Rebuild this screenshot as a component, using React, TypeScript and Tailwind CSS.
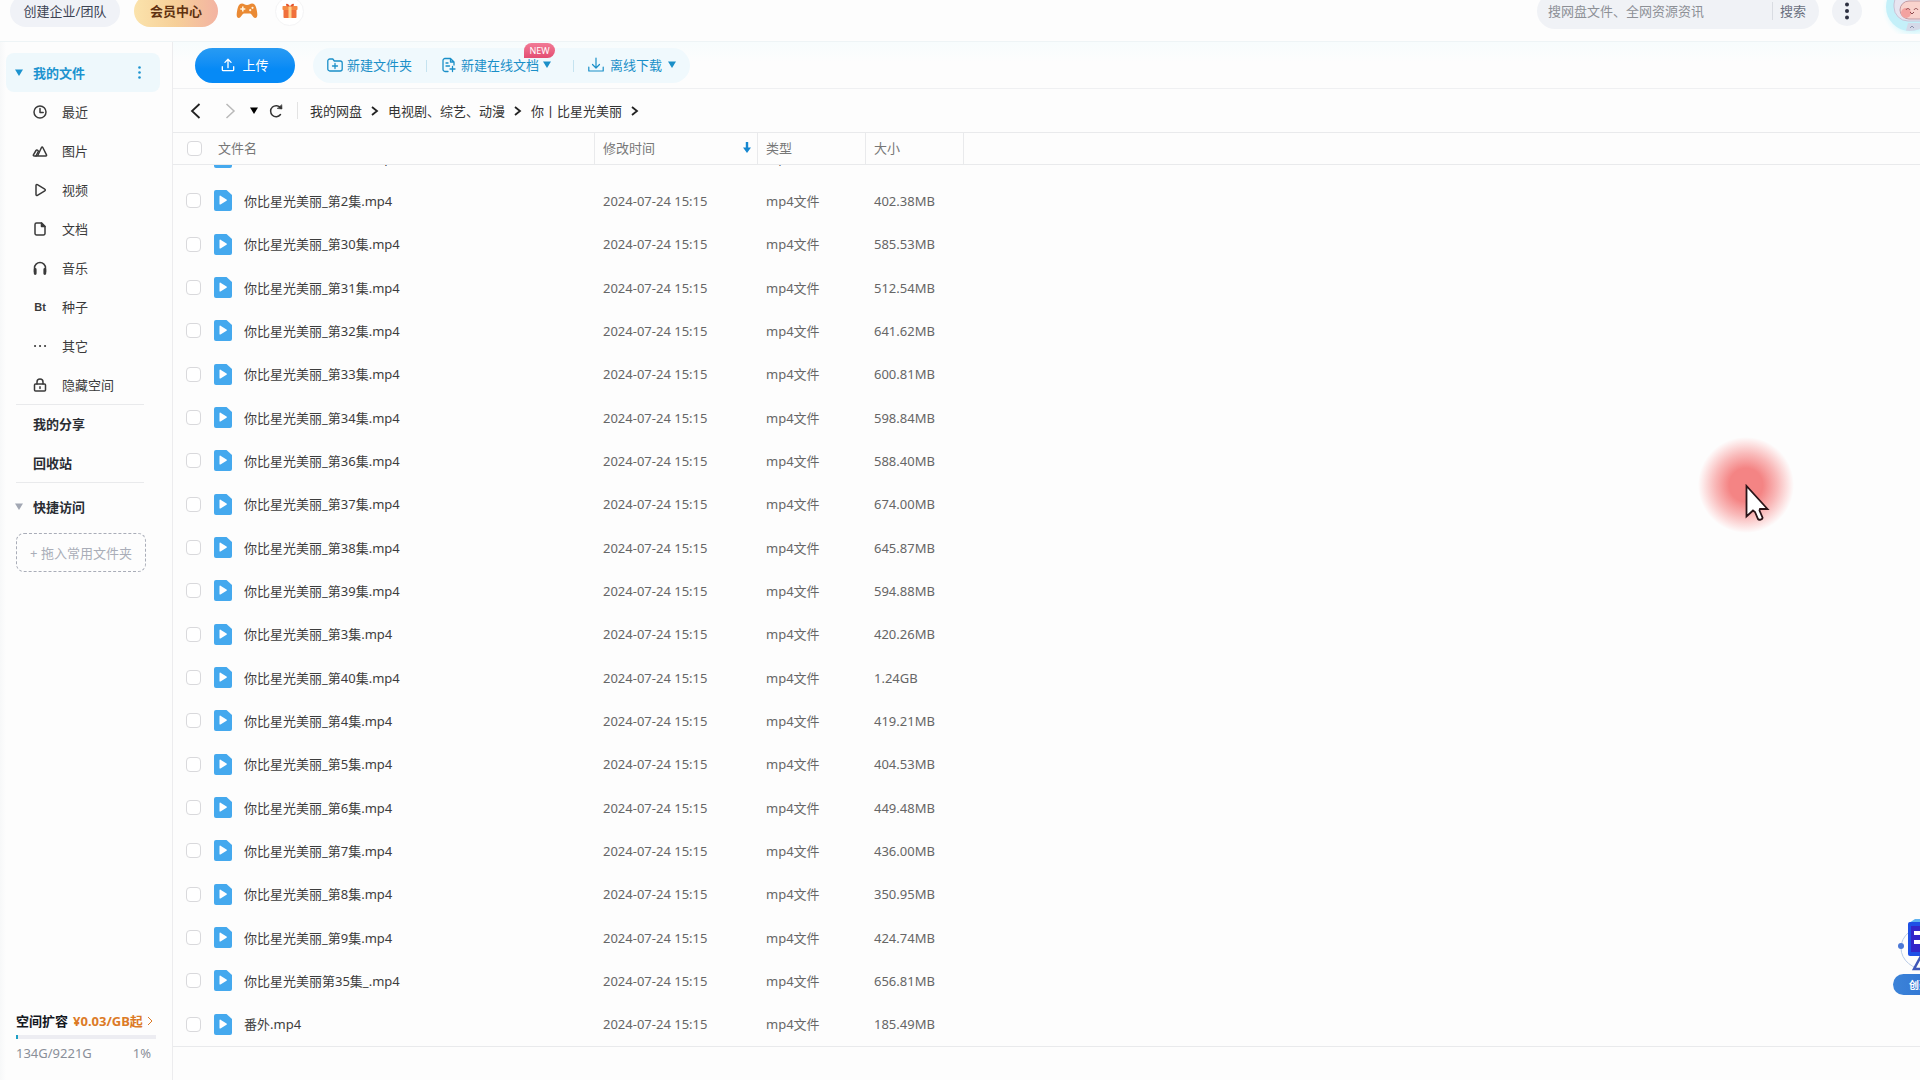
import { useLayoutEffect, useRef, type ReactNode } from "react";
import { clsx } from "clsx";

const FILES = [
  { name: "你比星光美丽_第29集.mp4", size: "531.07MB" },
  { name: "你比星光美丽_第2集.mp4", size: "402.38MB" },
  { name: "你比星光美丽_第30集.mp4", size: "585.53MB" },
  { name: "你比星光美丽_第31集.mp4", size: "512.54MB" },
  { name: "你比星光美丽_第32集.mp4", size: "641.62MB" },
  { name: "你比星光美丽_第33集.mp4", size: "600.81MB" },
  { name: "你比星光美丽_第34集.mp4", size: "598.84MB" },
  { name: "你比星光美丽_第36集.mp4", size: "588.40MB" },
  { name: "你比星光美丽_第37集.mp4", size: "674.00MB" },
  { name: "你比星光美丽_第38集.mp4", size: "645.87MB" },
  { name: "你比星光美丽_第39集.mp4", size: "594.88MB" },
  { name: "你比星光美丽_第3集.mp4", size: "420.26MB" },
  { name: "你比星光美丽_第40集.mp4", size: "1.24GB" },
  { name: "你比星光美丽_第4集.mp4", size: "419.21MB" },
  { name: "你比星光美丽_第5集.mp4", size: "404.53MB" },
  { name: "你比星光美丽_第6集.mp4", size: "449.48MB" },
  { name: "你比星光美丽_第7集.mp4", size: "436.00MB" },
  { name: "你比星光美丽_第8集.mp4", size: "350.95MB" },
  { name: "你比星光美丽_第9集.mp4", size: "424.74MB" },
  { name: "你比星光美丽第35集_.mp4", size: "656.81MB" },
  { name: "番外.mp4", size: "185.49MB" },
];

function Icon({ size = 16, children, className }: { size?: number; children: ReactNode; className?: string }) {
  return (
    <svg
      width={size}
      height={size}
      viewBox="0 0 16 16"
      fill="none"
      stroke="currentColor"
      strokeWidth="1.5"
      strokeLinecap="round"
      strokeLinejoin="round"
      className={clsx("shrink-0", className)}
      aria-hidden
    >
      {children}
    </svg>
  );
}

function Caret({ className }: { className?: string }) {
  return (
    <svg width="8" height="7" viewBox="0 0 8 7" className={clsx("shrink-0", className)} aria-hidden>
      <path d="M0 0.5h8L4 7z" fill="currentColor" />
    </svg>
  );
}

function Chevron() {
  return (
    <svg width="8" height="10" viewBox="0 0 8 10" fill="none" stroke="#222" strokeWidth="1.8" className="mx-[9px] shrink-0" aria-hidden>
      <path d="M1 1l5 4-5 4" />
    </svg>
  );
}

const CATEGORIES: { label: string; icon: ReactNode }[] = [
  {
    label: "最近",
    icon: (
      <Icon>
        <circle cx="8" cy="8" r="6" />
        <path d="M8 4.5V8.5h3.2" />
      </Icon>
    ),
  },
  {
    label: "图片",
    icon: (
      <Icon>
        <path d="M5.500 13l4-8.500c.3-.6 1-.6 1.300 0l3.700 7.400c.2.500 0 1.100-.6 1.100H2.200c-.7 0-1.100-.6-.8-1.200L4 7.500c.4-.7 1.200-.7 1.600-.2" />
        <path d="M4 13l2.500-5" />
      </Icon>
    ),
  },
  {
    label: "视频",
    icon: (
      <Icon>
        <path d="M4 3.400c0-.8.7-1.200 1.400-.8l7.400 4.500c.7.4.7 1.300 0 1.700l-7.400 4.500c-.7.4-1.400 0-1.400-.8z" />
      </Icon>
    ),
  },
  {
    label: "文档",
    icon: (
      <Icon>
        <path d="M9.500 2H4.500A1.500 1.500 0 0 0 3 3.500v9A1.500 1.500 0 0 0 4.500 14h7a1.500 1.500 0 0 0 1.500-1.500V5.500z" />
        <path d="M9.500 2v3.500H13z" fill="currentColor" />
      </Icon>
    ),
  },
  {
    label: "音乐",
    icon: (
      <Icon>
        <path d="M2.500 12V8a5.500 5.500 0 0 1 11 0v4" />
        <path d="M3.200 9.500v4M12.800 9.500v4" strokeWidth="2.800" />
      </Icon>
    ),
  },
  {
    label: "种子",
    icon: <span className="w-4 text-center font-['Liberation_Sans'] text-[11px] font-bold">Bt</span>,
  },
  {
    label: "其它",
    icon: (
      <Icon>
        <path d="M3 8h.1M8 8h.1M13 8h.1" strokeWidth="2" />
      </Icon>
    ),
  },
  {
    label: "隐藏空间",
    icon: (
      <Icon>
        <rect x="2.500" y="7" width="11" height="7" rx="1" />
        <path d="M5 7V5a3 3 0 0 1 6 0v2M8 9.800v1.700" />
      </Icon>
    ),
  },
];

function TopBar() {
  return (
    <header className="h-[42px] shrink-0 overflow-hidden border-b border-[#eef4f6]">
      <div className="-mt-3 flex h-[46px] items-center pl-[10px]">
        <button type="button" className="h-8 w-[110px] rounded-full bg-[#f0f2f7] text-[#3c4353]">
          创建企业/团队
        </button>
        <button
          type="button"
          className="ml-[14px] h-8 w-[84px] rounded-full bg-gradient-to-r from-[#fbe3ac] via-[#f6cf98] to-[#f3b3a2] font-bold text-[#5f3110]"
        >
          会员中心
        </button>
        <button type="button" aria-label="游戏" className="ml-[18px]">
          <svg width="22" height="16" viewBox="0 0 22 16" aria-hidden>
            <path
              d="M6 .5c2 0 2.500 1.500 5 1.500s3-1.500 5-1.500c3 0 4 3 4.800 7 .8 4 1 7.500-1.600 7.500-2.400 0-3.200-4.500-5.200-4.500H8c-2 0-2.800 4.500-5.200 4.500C.2 15 .4 11.500 1.200 7.500 2 3.500 3 .5 6 .5z"
              fill="#ea8a34"
            />
            <path d="M6.800 3.500v5M4.300 6h5" stroke="#fff3df" strokeWidth="1.600" />
            <circle cx="14.200" cy="7.200" r="1.100" fill="#fff3df" />
            <circle cx="16.500" cy="4.800" r="1.100" fill="#fff3df" />
          </svg>
        </button>
        <button
          type="button"
          aria-label="礼物"
          className="ml-[17px] flex size-[29px] items-center justify-center rounded-full border border-[#f4f4f5] bg-white"
        >
          <svg width="16" height="16" viewBox="0 0 16 16" aria-hidden>
            <path d="M1.500 5h13v9.200c0 .5-.3.800-.8.800H2.300c-.5 0-.8-.3-.8-.800z" fill="#f0703c" />
            <rect x=".5" y="3" width="15" height="4" rx=".8" fill="#f58b45" />
            <path d="M6.500 3h3v12h-3z" fill="#ffd08a" />
            <path d="M8 3.500C6.500.5 4 0 4 2c0 1 2 1.500 4 1.500zm0 0C9.500.5 12 0 12 2c0 1-2 1.500-4 1.500z" fill="#e4552c" />
          </svg>
        </button>

        <form className="ml-auto flex h-9 w-[282px] items-center rounded-full bg-[#f0f2f6] pl-[11px]">
          <input
            type="text"
            aria-label="搜索"
            placeholder="搜网盘文件、全网资源资讯"
            className="min-w-0 flex-1 bg-transparent outline-none placeholder:text-[#8d9096]"
          />
          <span className="h-[18px] w-px bg-[#d9dce2]" />
          <button type="button" className="w-[46px] pr-[6px] text-[#6b7080]">
            搜索
          </button>
        </form>
        <button
          type="button"
          aria-label="更多"
          className="ml-[13px] flex size-[30px] items-center justify-center rounded-full bg-[#f0f2f6] text-[#2c3040]"
        >
          <svg width="4" height="18" viewBox="0 0 4 18" fill="currentColor" aria-hidden>
            <circle cx="2" cy="2.500" r="2" />
            <circle cx="2" cy="9" r="2" />
            <circle cx="2" cy="15.500" r="2" />
          </svg>
        </button>
        <div className="ml-[18px] w-10 shrink-0 overflow-hidden">
          <svg width="60" height="46" viewBox="0 0 60 46" aria-label="头像">
            <defs>
              <radialGradient id="halo">
                <stop offset="0.7" stopColor="#d3f6fb" />
                <stop offset="1" stopColor="#e9fbfe" stopOpacity="0" />
              </radialGradient>
              <clipPath id="face">
                <circle cx="30" cy="19" r="24" />
              </clipPath>
            </defs>
            <circle cx="34" cy="20" r="32" fill="url(#halo)" />
            <g clipPath="url(#face)">
              <rect width="60" height="46" fill="#c4f0f9" />
              <path d="M25 46l3-11h28v11z" fill="#d4d9e8" />
              <rect x="14" y="2" width="44" height="31" rx="14" fill="#e8e5f0" stroke="#c9c3d6" />
              <rect x="20" y="13" width="34" height="18" rx="9" fill="#f9d3cd" stroke="#c39ba2" />
              <circle cx="26" cy="25" r="5" fill="#f3a2a0" />
              <path d="M26 22c1-2 3-2 4 0M34 22c1-2 3-2 4 0" stroke="#8d4a4e" fill="none" />
              <path d="M30 24l2 2 2-2" stroke="#8d4a4e" fill="none" />
              <path d="M30 40l2-2 2 2" stroke="#8c93ad" fill="none" />
            </g>
          </svg>
        </div>
      </div>
    </header>
  );
}

function Sidebar() {
  return (
    <aside className="flex w-[173px] shrink-0 flex-col border-r border-[#ececee] bg-gradient-to-r from-[#f7f8f9] to-[#fdfdfd] to-[6px] pt-[11px]">
      <div className="ml-[6px] mr-3 flex h-[39px] items-center rounded-lg bg-[#eef8fc] pl-[9px] text-[#1c93cf]">
        <Caret />
        <a href="#files" className="ml-[10px] font-bold">
          我的文件
        </a>
        <button type="button" aria-label="更多" className="ml-auto mr-[19px]">
          <svg width="3" height="13" viewBox="0 0 3 13" fill="currentColor" aria-hidden>
            <circle cx="1.500" cy="1.500" r="1.300" />
            <circle cx="1.500" cy="6.500" r="1.300" />
            <circle cx="1.500" cy="11.500" r="1.300" />
          </svg>
        </button>
      </div>

      <nav className="flex flex-col text-[#3a3a3a]">
        {CATEGORIES.map((c) => (
          <a key={c.label} href="#files" className="flex h-[39px] items-center gap-[14px] pl-8">
            {c.icon}
            {c.label}
          </a>
        ))}
      </nav>
      <nav className="ml-4 mr-7 flex flex-col border-y border-[#e9eaec] font-bold text-[#2a2d33]">
        <a href="#share" className="flex h-[38px] items-center pl-[17px]">
          我的分享
        </a>
        <a href="#trash" className="flex h-[39px] items-center pl-[17px]">
          回收站
        </a>
      </nav>

      <div className="mt-1 flex h-[39px] items-center pl-[15px] font-bold text-[#2a2d33]">
        <Caret className="text-[#a2a7b3]" />
        <span className="ml-[10px]">快捷访问</span>
      </div>
      <button
        type="button"
        className="ml-4 mr-[26px] mt-[7px] h-[39px] rounded-lg border border-dashed border-[#a9adb8] text-[#a9adb8]"
      >
        + 拖入常用文件夹
      </button>

      <div className="mx-4 mb-[17px] mt-auto">
        <a href="#expand" className="flex items-center whitespace-nowrap font-bold text-[#15181e]">
          空间扩容
          <span className="ml-[5px] text-[#dc7a26]">¥0.03/GB起</span>
          <svg width="6" height="10" viewBox="0 0 6 10" fill="none" stroke="#dc7a26" className="ml-1" aria-hidden>
            <path d="M1 1l4 4-4 4" />
          </svg>
        </a>
        <div className="mt-1 h-1 bg-[#ededf2]">
          <div className="h-1 w-[1%] min-w-[2px] bg-[#1d9fc4]" />
        </div>
        <div className="mt-1 flex justify-between pr-[5px] text-[#8a8f99]">
          <span>134G/9221G</span>
          <span>1%</span>
        </div>
      </div>
    </aside>
  );
}

function Toolbar() {
  return (
    <div className="flex h-[47px] shrink-0 items-start border-b border-[#eff0f2] bg-gradient-to-b from-[#f7fcfd] to-[#fdfdfd] to-[20px] pl-[22px] pt-[6px]">
      <button
        type="button"
        className="flex h-[35px] w-[100px] items-center justify-center gap-[7px] rounded-full bg-gradient-to-b from-[#279bf3] to-[#068af6] to-60% pb-[2px] text-white"
      >
        <Icon size={14}>
          <path d="M8 11V1.500M4.500 5L8 1.500 11.500 5M1.500 10v3.500a1 1 0 0 0 1 1h11a1 1 0 0 0 1-1V10" />
        </Icon>
        上传
      </button>
      <div className="ml-[18px] flex h-[35px] items-center rounded-full bg-[#f0f9fd] px-[14px] text-[#1a8fc8]">
        <button type="button" className="flex h-[33px] items-center gap-1 pb-[2px]">
          <Icon>
            <path d="M.8 4a2 2 0 0 1 2-2h3l1.500 2h5.900a2 2 0 0 1 2 2v6a2 2 0 0 1-2 2H2.800a2 2 0 0 1-2-2zM8 6.500v5M5.500 9h5" strokeWidth="1.300" />
          </Icon>
          新建文件夹
        </button>
        <span className="mx-[14px] h-3 w-px bg-[#c5e3f0]" />
        <button type="button" className="relative flex h-[33px] items-center gap-1 pb-[2px]">
          <Icon>
            <path d="M7 14.500H4a2 2 0 0 1-2-2v-9a2 2 0 0 1 2-2h5.500L13 5v3M9.500 1.500V5H13M5 6h2M5 9h3.500M11.500 9.500v5M9 12h5" strokeWidth="1.300" />
          </Icon>
          新建在线文档
          <Caret />
          <span className="absolute -right-1 -top-[6px] flex h-[15px] w-[31px] items-center justify-center rounded-full rounded-bl-none bg-gradient-to-b from-[#f27a96] to-[#e34d72] text-[9px] text-white">
            NEW
          </span>
        </button>
        <span className="ml-[22px] mr-[14px] h-3 w-px bg-[#c5e3f0]" />
        <button type="button" className="flex h-[33px] items-center gap-[6px] pb-[2px]">
          <Icon>
            <path d="M8 1v9.500M4.500 7.500L8 11l3.500-3.500M.8 10v4h14.400v-4" strokeWidth="1.200" />
          </Icon>
          离线下载
          <Caret />
        </button>
      </div>
    </div>
  );
}

function Breadcrumb() {
  return (
    <div className="flex h-[43px] shrink-0 items-center pl-[17px] text-[#333]">
      <button type="button" aria-label="后退">
        <svg width="11" height="16" viewBox="0 0 11 16" fill="none" stroke="#222" strokeWidth="1.800" aria-hidden>
          <path d="M9.500 1L2 8l7.500 7" />
        </svg>
      </button>
      <button type="button" aria-label="前进" className="ml-6">
        <svg width="11" height="16" viewBox="0 0 11 16" fill="none" stroke="#b9b9b9" strokeWidth="1.500" aria-hidden>
          <path d="M1.500 1L9 8l-7.500 7" />
        </svg>
      </button>
      <button type="button" aria-label="历史" className="ml-[14px]">
        <Caret className="text-black" />
      </button>
      <button type="button" aria-label="刷新" className="ml-[10px]">
        <Icon>
          <path d="M12.500 11.500A5.500 5.500 0 1 1 12.600 5" />
          <path d="M9.500 5.500L14 6l-.2-4z" fill="currentColor" strokeWidth="0.600" />
        </Icon>
      </button>
      <span className="ml-[13px] mr-3 h-[17px] w-px bg-[#e3e3e3]" />
      <a href="#root">我的网盘</a>
      <Chevron />
      <a href="#tv">电视剧、综艺、动漫</a>
      <Chevron />
      <a href="#show">你丨比星光美丽</a>
      <Chevron />
    </div>
  );
}

function FileIcon() {
  return (
    <svg width="18" height="21" viewBox="0 0 18 21" className="shrink-0" aria-hidden>
      <path d="M2 0h10.500L18 5v14a2 2 0 0 1-2 2H2a2 2 0 0 1-2-2V2a2 2 0 0 1 2-2z" fill="#45a9ee" />
      <path d="M5.500 6.300c0-.6.500-.9 1-.6l6 3.800c.5.300.5.900 0 1.200l-6 3.800c-.5.300-1 0-1-.6z" fill="#fff" />
    </svg>
  );
}

const tick =
  "block size-[15px] appearance-none rounded-[4px] border border-[#d9d9dc] bg-white checked:border-[#279bf3] checked:bg-[#279bf3]";
const th = "border-r border-[#e9eaec] pb-[2px] text-left font-normal";

// shared by the fixed header and the scrolling body so the columns line up
function Columns() {
  return (
    <colgroup>
      <col className="w-[41px]" />
      <col className="w-[381px]" />
      <col className="w-[163px]" />
      <col className="w-[108px]" />
      <col className="w-[98px]" />
      <col />
    </colgroup>
  );
}

function FileTable() {
  const scroller = useRef<HTMLDivElement>(null);

  useLayoutEffect(() => {
    const el = scroller.current;
    if (el) el.scrollTop = el.scrollHeight;
  }, []);

  return (
    <>
      <div className="shrink-0 border-y border-[#e9eaec]">
        <table className="w-full table-fixed border-separate border-spacing-0 text-[#777]">
          <Columns />
          <thead>
            <tr className="h-[31px]">
              <th className="pl-[14px]">
                <input type="checkbox" aria-label="全选" className={tick} />
              </th>
              <th className={clsx(th, "pl-1")}>文件名</th>
              <th className={clsx(th, "pl-2")}>
                <span className="flex items-center justify-between pr-[6px]">
                  修改时间
                  <svg width="8" height="11" viewBox="0 0 8 11" aria-hidden>
                    <path d="M2.800 0h2.400v5.500H8L4 11 0 5.500h2.800z" fill="#1687d0" />
                  </svg>
                </span>
              </th>
              <th className={clsx(th, "pl-2")}>类型</th>
              <th className={clsx(th, "pl-2")}>大小</th>
              <td />
            </tr>
          </thead>
        </table>
      </div>
      <div ref={scroller} className="min-h-0 flex-1 overflow-y-auto border-b border-[#e9eaec] [scrollbar-width:none]">
        <table className="h-[910px] w-full table-fixed border-separate border-spacing-0 text-[#666]">
          <Columns />
          <tbody>
            {FILES.map((f) => (
              <tr key={f.name} className="h-[43px]">
                <td className="pl-[13px]">
                  <input type="checkbox" aria-label={f.name} className={tick} />
                </td>
                <td>
                  <a href="#file" className="flex items-center gap-3 text-[#3d3d3d]">
                    <FileIcon />
                    {f.name}
                  </a>
                </td>
                <td className="pl-2">2024-07-24 15:15</td>
                <td className="pl-2">mp4文件</td>
                <td className="pl-2">{f.size}</td>
                <td />
              </tr>
            ))}
          </tbody>
        </table>
      </div>
    </>
  );
}

function Assistant() {
  return (
    <div className="absolute bottom-[85px] right-0 flex w-[27px] flex-col items-start overflow-hidden">
      <svg width="60" height="56" viewBox="0 0 60 56" aria-hidden>
        <ellipse cx="34" cy="30" rx="26" ry="22" fill="none" stroke="#b9cbe6" />
        <path d="M16 5l6-4h34v6z" fill="#5fb2f0" />
        <rect x="15" y="4" width="40" height="34" rx="2" fill="#1f50e6" />
        <rect x="18" y="8" width="34" height="26" fill="#3326c9" />
        <path d="M21 13h14v4H21zM21 22h14v4H21z" fill="#fff" />
        <path d="M28 38l-7 13h16" fill="none" stroke="#3f57b8" strokeWidth="2.500" />
        <circle cx="8" cy="28" r="3" fill="#4b78d6" />
      </svg>
      <button
        type="button"
        className="h-[21px] w-20 whitespace-nowrap rounded-full bg-gradient-to-r from-[#3c83d8] to-[#2567cf] pl-4 text-left text-[10px] font-bold text-white"
      >
        创建
      </button>
    </div>
  );
}

function Pointer() {
  return (
    <div className="pointer-events-none absolute left-[1698px] top-[437px] size-24 rounded-full bg-[radial-gradient(circle_closest-side,#f48484_0%,#f48484_35%,#f9b9b9_65%,#fdeaea_90%,transparent_100%)]">
      <svg width="26" height="40" viewBox="0 0 26 40" className="absolute left-[47px] top-[47px]" aria-hidden>
        <path
          d="M1.500 2v30.500l6.500-6 2 1.500 3 7c.8 1.500 5 .5 4.500-1.500l-3-7 .5-1.500h7.500z"
          fill="#fff"
          stroke="#2a1418"
          strokeWidth="1.800"
        />
      </svg>
    </div>
  );
}

export default function App() {
  return (
    <div className="relative flex h-screen flex-col overflow-hidden bg-[#fdfdfd] font-['Noto_Sans','Noto_Sans_CJK_SC',sans-serif] text-[13px] leading-5">
      <TopBar />
      <div className="flex min-h-0 flex-1">
        <Sidebar />
        <main className="flex min-w-0 flex-1 flex-col pb-[33px]">
          <Toolbar />
          <Breadcrumb />
          <FileTable />
        </main>
      </div>
      <Assistant />
      <Pointer />
    </div>
  );
}
